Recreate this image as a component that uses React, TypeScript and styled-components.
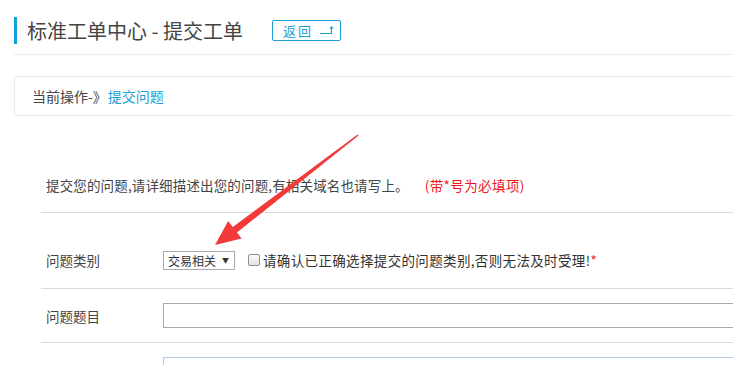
import React from 'react'
import styled, { createGlobalStyle } from 'styled-components'

const GlobalStyle = createGlobalStyle`
  html, body {
    margin: 0;
    padding: 0;
    background: #ffffff;
    overflow: hidden;
  }
  body {
    font-family: "Noto Sans CJK SC", "Noto Sans", sans-serif;
    color: #333;
  }
`

const Page = styled.div`
  position: relative;
  width: 719px;
  height: 365px;
  overflow: hidden;
  padding-left: 14px;
`

const Header = styled.div`
  display: flex;
  align-items: center;
  height: 55px;
  padding-top: 6px;
  box-sizing: border-box;
  border-bottom: 1px solid #ececec;
`

const TitleBar = styled.div`
  width: 3px;
  height: 27px;
  background: #0fa1e0;
  margin-right: 10px;
`

const Title = styled.h1`
  margin: 0;
  font-size: 20px;
  font-weight: 400;
  color: #444;
  line-height: 27px;
`

const BackButton = styled.a`
  display: inline-flex;
  align-items: center;
  gap: 6px;
  margin-left: 29px;
  height: 19px;
  padding: 0 4px 0 10px;
  border: 1px solid #1a9fd9;
  border-radius: 2px;
  color: #1a9fd9;
  font-size: 13px;
  letter-spacing: 2px;
  text-decoration: none;
`

const Crumb = styled.div`
  margin-top: 21px;
  height: 40px;
  box-sizing: border-box;
  border: 1px solid #ececec;
  border-right: none;
  display: flex;
  align-items: center;
  padding-left: 17px;
  font-size: 14px;
  color: #444;
`

const CrumbLink = styled.span`
  color: #1a9fd9;
  margin-left: 1px;
`

const Form = styled.div`
  margin-left: 27px;
  margin-top: 44px;
`

const Intro = styled.div`
  height: 52px;
  line-height: 50px;
  padding-left: 5px;
  border-bottom: 1px solid #dcdcdc;
  font-size: 13.5px;
  letter-spacing: 0.15px;
  color: #444;
`

const Required = styled.span`
  color: #f2141c;
  margin-left: 16px;
  letter-spacing: 0.4px;
`

const Row = styled.div<{ $top: number; $bottom: number }>`
  display: flex;
  align-items: center;
  padding: ${p => p.$top}px 0 ${p => p.$bottom}px;
  border-bottom: 1px solid #dcdcdc;
`

const Label = styled.div`
  width: 117px;
  padding-left: 5px;
  font-size: 13.5px;
  color: #444;
`

const Select = styled.div`
  display: inline-flex;
  align-items: center;
  gap: 6px;
  height: 19px;
  box-sizing: border-box;
  padding: 0 5px 0 4px;
  border: 1px solid #aaa;
  font-size: 12px;
  color: #333;
`

const Caret = styled.span`
  font-size: 7px;
  color: #333;
`

const Check = styled.label`
  display: inline-flex;
  align-items: center;
  margin-left: 13px;
  font-size: 13.5px;
  letter-spacing: 0.35px;
  color: #333;
`

const Box = styled.span`
  width: 12px;
  height: 12px;
  box-sizing: border-box;
  border: 1px solid #8f8f8f;
  border-radius: 2px;
  background: linear-gradient(#fcfcfc, #e2e2e2);
  margin-right: 3px;
`

const Star = styled.span`
  color: #f2141c;
`

const TextInput = styled.div`
  flex: 1;
  height: 25px;
  box-sizing: border-box;
  border: 1px solid #a9a9a9;
  border-right: none;
`

const TextArea = styled.div`
  margin-left: 122px;
  margin-top: 14px;
  height: 40px;
  border: 1px solid #b4cbe6;
  border-right: none;
`

const Arrow = styled.svg`
  position: absolute;
  left: 0;
  top: 0;
  pointer-events: none;
`

const ReturnIcon = () => (
  <svg width="17" height="10" viewBox="0 0 17 10">
    <path d="M1 8.5 H12.5 V2.5" fill="none" stroke="#1a9fd9" strokeWidth="1.2" />
    <path d="M10.3 3.6 L12.5 1 L14.7 3.6 Z" fill="#1a9fd9" />
  </svg>
)

export default function App() {
  return (
    <>
      <GlobalStyle />
      <Page>
        <Header>
          <TitleBar />
          <Title>标准工单中心 - 提交工单</Title>
          <BackButton href="#">
            返回
            <ReturnIcon />
          </BackButton>
        </Header>
        <Crumb>
          当前操作-》<CrumbLink>提交问题</CrumbLink>
        </Crumb>
        <Form>
          <Intro>
            提交您的问题,请详细描述出您的问题,有相关域名也请写上。
            <Required>(带*号为必填项)</Required>
          </Intro>
          <Row $top={37} $bottom={18}>
            <Label>问题类别</Label>
            <Select>
              交易相关<Caret>▼</Caret>
            </Select>
            <Check>
              <Box />
              请确认已正确选择提交的问题类别,否则无法及时受理!<Star>*</Star>
            </Check>
          </Row>
          <Row $top={14} $bottom={14}>
            <Label>问题题目</Label>
            <TextInput />
          </Row>
          <TextArea />
        </Form>
        <Arrow width="733" height="365" viewBox="0 0 733 365">
          <polygon
            points="358.6,135.4 237.0,232.5 241.6,238.4 215,245 228.2,221.0 232.8,226.9 357.6,134.6"
            fill="#f23a3a"
          />
        </Arrow>
      </Page>
    </>
  )
}
